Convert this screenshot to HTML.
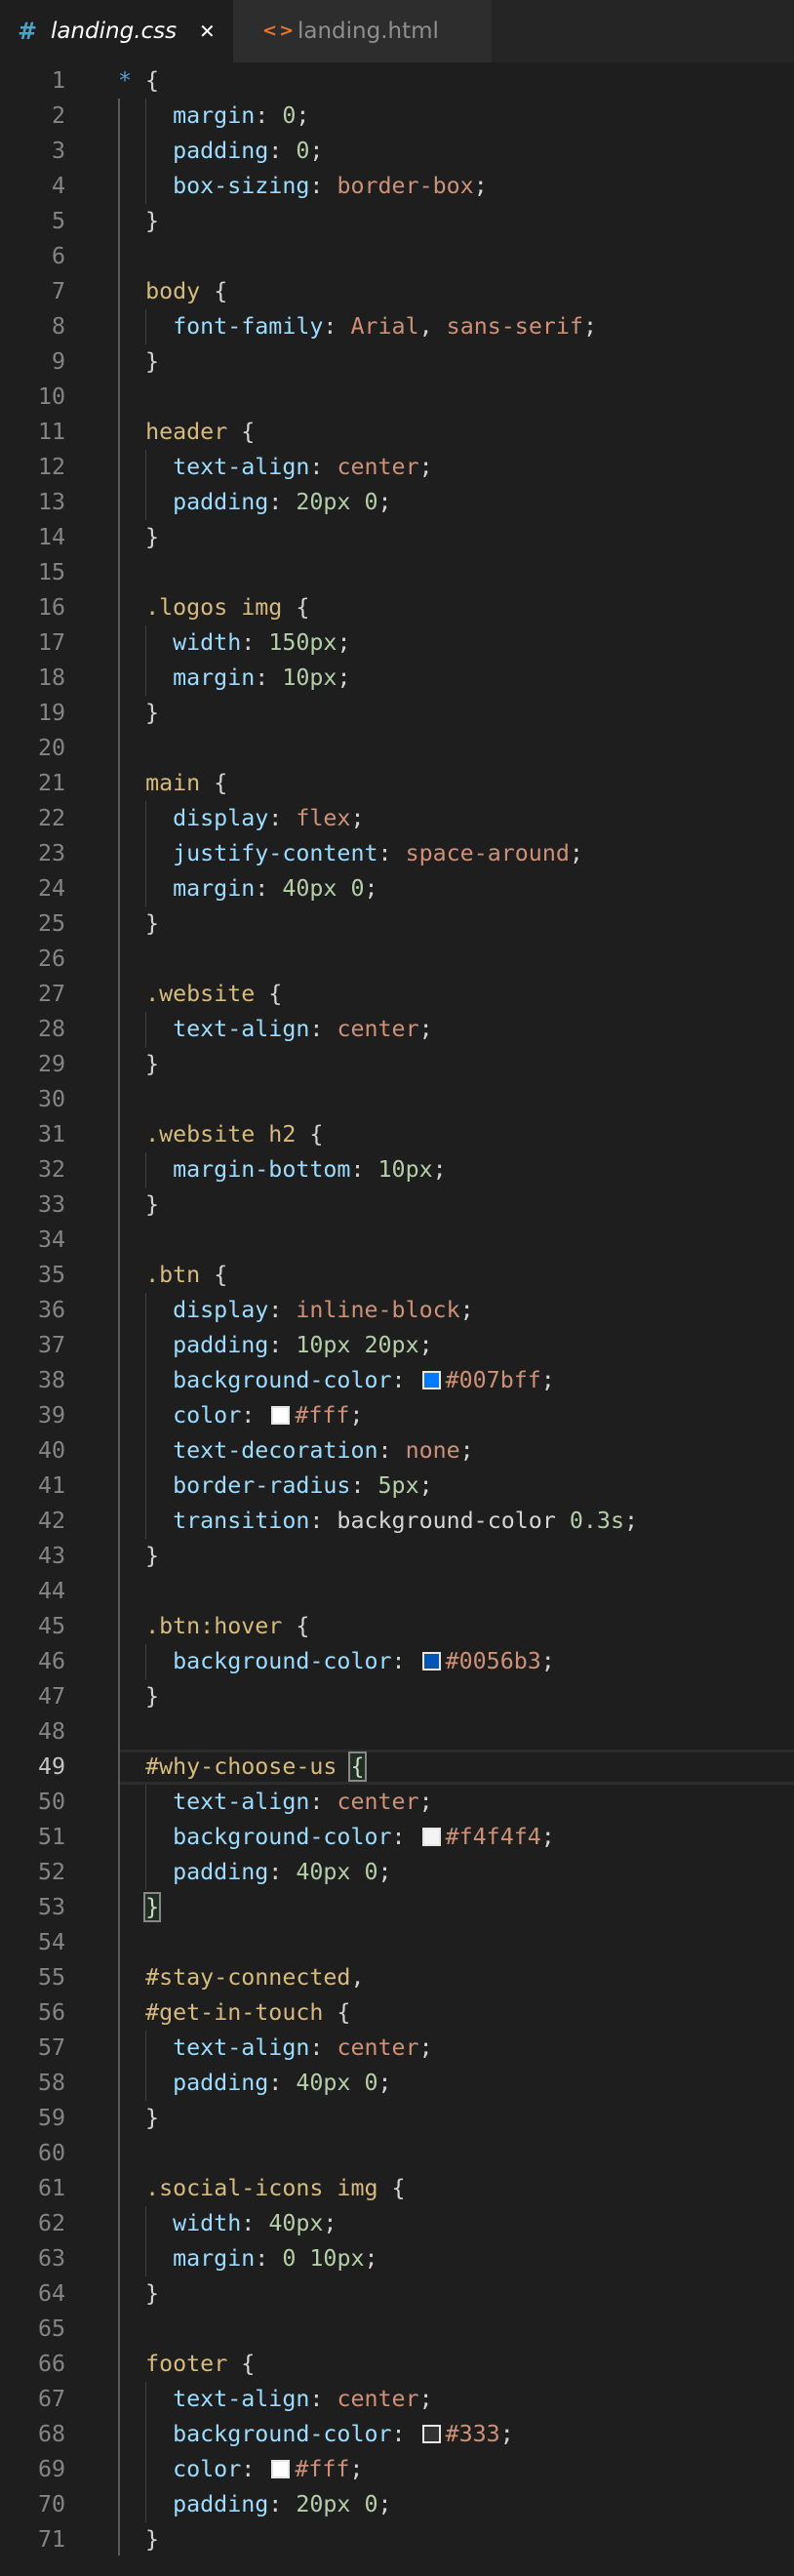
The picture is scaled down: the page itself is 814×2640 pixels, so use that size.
<!DOCTYPE html>
<html><head><meta charset="utf-8"><style>
*{margin:0;padding:0;box-sizing:border-box}
body{width:814px;height:2640px;background:#1e1e1e;overflow:hidden;position:relative;font-family:"DejaVu Sans Mono","Liberation Mono",monospace}
.tabs{position:absolute;left:0;top:0;width:814px;height:64px;background:#252526}
.tab{position:absolute;top:0;height:64px;font-family:"DejaVu Sans","Liberation Sans",sans-serif;font-size:23px;line-height:64px}
.t1{left:0;width:239px;background:#1e1e1e;color:#fff}
.t2{left:239px;width:265px;background:#2d2d2d;color:#8e8e8e}
.code{position:absolute;left:0;top:65px;width:814px}
.l{position:relative;height:36px;line-height:36px;font-size:23.3px;white-space:pre;color:#d4d4d4}
.n{position:absolute;left:0;width:67px;text-align:right;color:#858585}
.c{position:absolute;left:121px}
.g{position:absolute;left:149px;top:0;width:1px;height:36px;background:#404040}
.og{position:absolute;left:121px;top:101px;width:2px;height:2518px;background:#5a5a5a}
.p{color:#9cdcfe}.v{color:#ce9178}.u{color:#b5cea8}.s{color:#d7ba7d}.k{color:#569cd6}
.sw{display:inline-block;width:19px;height:19px;border:2px solid #e6e6e6;vertical-align:-2px;margin:0 5px 0 3px}
.cur{position:absolute;left:123px;right:0;top:0;height:36px;border-top:3px solid #2c2c2c;border-bottom:3px solid #2c2c2c}
.bm{outline:2px solid #888;background:#203020}
</style></head><body>
<div class="tabs">
<div class="tab t1"><span style="position:absolute;left:18px;color:#4aa3c8;font-weight:bold;font-size:24px">#</span><span style="position:absolute;left:52px;font-style:italic">landing.css</span><span style="position:absolute;left:204px;font-weight:bold;font-size:20px">✕</span></div>
<div class="tab t2"><span style="position:absolute;left:30px;color:#e37933;font-size:18px;font-weight:bold;letter-spacing:2px">&lt;&gt;</span><span style="position:absolute;left:66px">landing.html</span></div>
</div>
<div class="og"></div>
<div class="code">
<div class="l"><span class="n">1</span><span class="c"><span class="k">*</span> {</span></div>
<div class="l"><span class="n">2</span><span class="g"></span><span class="c">    <span class="p">margin</span>: <span class="u">0</span>;</span></div>
<div class="l"><span class="n">3</span><span class="g"></span><span class="c">    <span class="p">padding</span>: <span class="u">0</span>;</span></div>
<div class="l"><span class="n">4</span><span class="g"></span><span class="c">    <span class="p">box-sizing</span>: <span class="v">border-box</span>;</span></div>
<div class="l"><span class="n">5</span><span class="c">  }</span></div>
<div class="l"><span class="n">6</span></div>
<div class="l"><span class="n">7</span><span class="c">  <span class="s">body</span> {</span></div>
<div class="l"><span class="n">8</span><span class="g"></span><span class="c">    <span class="p">font-family</span>: <span class="v">Arial</span>, <span class="v">sans-serif</span>;</span></div>
<div class="l"><span class="n">9</span><span class="c">  }</span></div>
<div class="l"><span class="n">10</span></div>
<div class="l"><span class="n">11</span><span class="c">  <span class="s">header</span> {</span></div>
<div class="l"><span class="n">12</span><span class="g"></span><span class="c">    <span class="p">text-align</span>: <span class="v">center</span>;</span></div>
<div class="l"><span class="n">13</span><span class="g"></span><span class="c">    <span class="p">padding</span>: <span class="u">20px</span> <span class="u">0</span>;</span></div>
<div class="l"><span class="n">14</span><span class="c">  }</span></div>
<div class="l"><span class="n">15</span></div>
<div class="l"><span class="n">16</span><span class="c">  <span class="s">.logos img</span> {</span></div>
<div class="l"><span class="n">17</span><span class="g"></span><span class="c">    <span class="p">width</span>: <span class="u">150px</span>;</span></div>
<div class="l"><span class="n">18</span><span class="g"></span><span class="c">    <span class="p">margin</span>: <span class="u">10px</span>;</span></div>
<div class="l"><span class="n">19</span><span class="c">  }</span></div>
<div class="l"><span class="n">20</span></div>
<div class="l"><span class="n">21</span><span class="c">  <span class="s">main</span> {</span></div>
<div class="l"><span class="n">22</span><span class="g"></span><span class="c">    <span class="p">display</span>: <span class="v">flex</span>;</span></div>
<div class="l"><span class="n">23</span><span class="g"></span><span class="c">    <span class="p">justify-content</span>: <span class="v">space-around</span>;</span></div>
<div class="l"><span class="n">24</span><span class="g"></span><span class="c">    <span class="p">margin</span>: <span class="u">40px</span> <span class="u">0</span>;</span></div>
<div class="l"><span class="n">25</span><span class="c">  }</span></div>
<div class="l"><span class="n">26</span></div>
<div class="l"><span class="n">27</span><span class="c">  <span class="s">.website</span> {</span></div>
<div class="l"><span class="n">28</span><span class="g"></span><span class="c">    <span class="p">text-align</span>: <span class="v">center</span>;</span></div>
<div class="l"><span class="n">29</span><span class="c">  }</span></div>
<div class="l"><span class="n">30</span></div>
<div class="l"><span class="n">31</span><span class="c">  <span class="s">.website h2</span> {</span></div>
<div class="l"><span class="n">32</span><span class="g"></span><span class="c">    <span class="p">margin-bottom</span>: <span class="u">10px</span>;</span></div>
<div class="l"><span class="n">33</span><span class="c">  }</span></div>
<div class="l"><span class="n">34</span></div>
<div class="l"><span class="n">35</span><span class="c">  <span class="s">.btn</span> {</span></div>
<div class="l"><span class="n">36</span><span class="g"></span><span class="c">    <span class="p">display</span>: <span class="v">inline-block</span>;</span></div>
<div class="l"><span class="n">37</span><span class="g"></span><span class="c">    <span class="p">padding</span>: <span class="u">10px</span> <span class="u">20px</span>;</span></div>
<div class="l"><span class="n">38</span><span class="g"></span><span class="c">    <span class="p">background-color</span>: <span class="sw" style="background:#007bff"></span><span class="v">#007bff</span>;</span></div>
<div class="l"><span class="n">39</span><span class="g"></span><span class="c">    <span class="p">color</span>: <span class="sw" style="background:#fff"></span><span class="v">#fff</span>;</span></div>
<div class="l"><span class="n">40</span><span class="g"></span><span class="c">    <span class="p">text-decoration</span>: <span class="v">none</span>;</span></div>
<div class="l"><span class="n">41</span><span class="g"></span><span class="c">    <span class="p">border-radius</span>: <span class="u">5px</span>;</span></div>
<div class="l"><span class="n">42</span><span class="g"></span><span class="c">    <span class="p">transition</span>: background-color <span class="u">0.3s</span>;</span></div>
<div class="l"><span class="n">43</span><span class="c">  }</span></div>
<div class="l"><span class="n">44</span></div>
<div class="l"><span class="n">45</span><span class="c">  <span class="s">.btn:hover</span> {</span></div>
<div class="l"><span class="n">46</span><span class="g"></span><span class="c">    <span class="p">background-color</span>: <span class="sw" style="background:#0056b3"></span><span class="v">#0056b3</span>;</span></div>
<div class="l"><span class="n">47</span><span class="c">  }</span></div>
<div class="l"><span class="n">48</span></div>
<div class="l"><span class="cur"></span><span class="n" style="color:#c6c6c6">49</span><span class="c">  <span class="s">#why-choose-us</span> <span class="bm">{</span></span></div>
<div class="l"><span class="n">50</span><span class="g"></span><span class="c">    <span class="p">text-align</span>: <span class="v">center</span>;</span></div>
<div class="l"><span class="n">51</span><span class="g"></span><span class="c">    <span class="p">background-color</span>: <span class="sw" style="background:#f4f4f4"></span><span class="v">#f4f4f4</span>;</span></div>
<div class="l"><span class="n">52</span><span class="g"></span><span class="c">    <span class="p">padding</span>: <span class="u">40px</span> <span class="u">0</span>;</span></div>
<div class="l"><span class="n">53</span><span class="c">  <span class="bm">}</span></span></div>
<div class="l"><span class="n">54</span></div>
<div class="l"><span class="n">55</span><span class="c">  <span class="s">#stay-connected</span>,</span></div>
<div class="l"><span class="n">56</span><span class="c">  <span class="s">#get-in-touch</span> {</span></div>
<div class="l"><span class="n">57</span><span class="g"></span><span class="c">    <span class="p">text-align</span>: <span class="v">center</span>;</span></div>
<div class="l"><span class="n">58</span><span class="g"></span><span class="c">    <span class="p">padding</span>: <span class="u">40px</span> <span class="u">0</span>;</span></div>
<div class="l"><span class="n">59</span><span class="c">  }</span></div>
<div class="l"><span class="n">60</span></div>
<div class="l"><span class="n">61</span><span class="c">  <span class="s">.social-icons img</span> {</span></div>
<div class="l"><span class="n">62</span><span class="g"></span><span class="c">    <span class="p">width</span>: <span class="u">40px</span>;</span></div>
<div class="l"><span class="n">63</span><span class="g"></span><span class="c">    <span class="p">margin</span>: <span class="u">0</span> <span class="u">10px</span>;</span></div>
<div class="l"><span class="n">64</span><span class="c">  }</span></div>
<div class="l"><span class="n">65</span></div>
<div class="l"><span class="n">66</span><span class="c">  <span class="s">footer</span> {</span></div>
<div class="l"><span class="n">67</span><span class="g"></span><span class="c">    <span class="p">text-align</span>: <span class="v">center</span>;</span></div>
<div class="l"><span class="n">68</span><span class="g"></span><span class="c">    <span class="p">background-color</span>: <span class="sw" style="background:#333"></span><span class="v">#333</span>;</span></div>
<div class="l"><span class="n">69</span><span class="g"></span><span class="c">    <span class="p">color</span>: <span class="sw" style="background:#fff"></span><span class="v">#fff</span>;</span></div>
<div class="l"><span class="n">70</span><span class="g"></span><span class="c">    <span class="p">padding</span>: <span class="u">20px</span> <span class="u">0</span>;</span></div>
<div class="l"><span class="n">71</span><span class="c">  }</span></div>
</div>
</body></html>
